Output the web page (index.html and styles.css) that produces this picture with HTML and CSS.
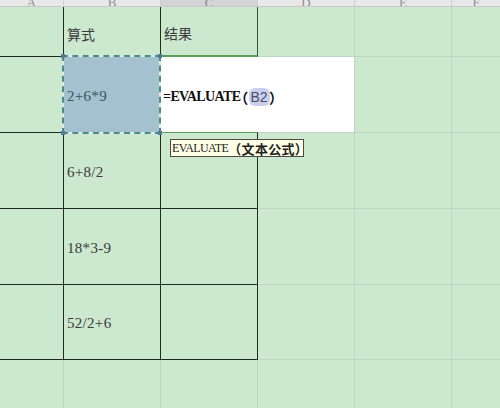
FILE: index.html
```html
<!DOCTYPE html>
<html>
    <head>
        <meta charset="utf-8" />
        <title>EVALUATE</title>
        <link rel="stylesheet" href="styles.css">
    </head>

    <body>
      <div id="feuille">

            <!-- en-tetes de colonnes -->
            <div class="hd"><span>A</span></div>
            <div class="hd"><span>B</span></div>
            <div class="hd actif"><span>C</span></div>
            <div class="hd"><span>D</span></div>
            <div class="hd"><span>E</span></div>
            <div class="hd fin"><span>F</span></div>

            <!-- ligne 1 -->
            <div class="cell tbl"></div>
            <div class="cell tbl titre">算式</div>
            <div class="cell tbl titre c1">结果</div>
            <div class="cell"></div>
            <div class="cell"></div>
            <div class="cell fin"></div>

            <!-- ligne 2 -->
            <div class="cell tbl"></div>
            <div class="cell tbl num sel">2+6*9</div>
            <div class="cell tbl c2"></div>
            <div class="cell"></div>
            <div class="cell"></div>
            <div class="cell fin"></div>

            <!-- ligne 3 -->
            <div class="cell tbl"></div>
            <div class="cell tbl num">6+8/2</div>
            <div class="cell tbl"></div>
            <div class="cell"></div>
            <div class="cell"></div>
            <div class="cell fin"></div>

            <!-- ligne 4 -->
            <div class="cell tbl"></div>
            <div class="cell tbl num">18*3-9</div>
            <div class="cell tbl"></div>
            <div class="cell"></div>
            <div class="cell"></div>
            <div class="cell fin"></div>

            <!-- ligne 5 -->
            <div class="cell tbl"></div>
            <div class="cell tbl num">52/2+6</div>
            <div class="cell tbl"></div>
            <div class="cell"></div>
            <div class="cell"></div>
            <div class="cell fin"></div>

            <!-- ligne 6 -->
            <div class="cell"></div>
            <div class="cell"></div>
            <div class="cell"></div>
            <div class="cell"></div>
            <div class="cell"></div>
            <div class="cell fin"></div>

            <!-- selection copiee (pointilles) -->
            <div id="fourmis">
                <i class="coin hg"></i><i class="coin hd2"></i>
                <i class="coin bg"></i><i class="coin bd"></i>
            </div>

            <!-- saisie de la formule -->
            <div id="saisie">
                <span class="fx">=EVALUATE</span><span class="par g">（</span><span class="ref">B2</span><span class="par">）</span>
            </div>

            <!-- info-bulle -->
            <div id="bulle"><span class="fn">EVALUATE</span><span class="cn">（文本公式）</span></div>
      </div>
    </body>
</html>
```

FILE: styles.css
```css
body{
    margin: 0;
    background-color: #cce8cf;
    overflow: hidden;
}
#feuille{
    position: relative;
    display: grid;
    grid-template-columns: 64px 97px 97px 97px 97px 48px;
    grid-template-rows: 7px 50px 76px 76px 76px 75px 76px;
    width: 500px;
    height: 408px;
    overflow: hidden;
}
.hd{
    box-sizing: border-box;
    background-color: #e8e8e8;
    border-right: 1px solid #cfcfcf;
    border-bottom: 1px solid #c9c9c9;
    display: flex;
    align-items: flex-end;
    justify-content: center;
    overflow: hidden;
}
.hd span{
    font-family: "Liberation Serif", serif;
    font-size: 13px;
    line-height: 13px;
    color: #8a8a8a;
    margin-bottom: -3px;
}
.hd.actif{
    background-color: #d4d4d4;
}
.cell{
    box-sizing: border-box;
    border-right: 1px solid #bcd6bf;
    border-bottom: 1px solid #bcd6bf;
    display: flex;
    align-items: center;
    padding-left: 3px;
    color: #3a3a3a;
}
.fin{
    border-right: none;
}
.tbl{
    border-right-color: #1d2e1f;
    border-bottom-color: #1d2e1f;
}
.titre{
    font-family: "Noto Sans CJK SC", sans-serif;
    font-size: 14px;
    padding-top: 4px;
}
.c1{
    border-right-color: #2f5a33;
    border-bottom: 2px solid #5c9e5c;
}
.c2{
    border-bottom-color: #5c9e5c;
}
.num{
    font-family: "Liberation Serif", serif;
    font-size: 15px;
    padding-top: 3px;
    letter-spacing: 0.3px;
}
.sel{
    background-color: #a4c1cf;
    color: #3d5060;
}
#fourmis{
    position: absolute;
    left: 62px;
    top: 55px;
    width: 99px;
    height: 79px;
    box-sizing: border-box;
    border: 2px solid #dcebe6;
}
#fourmis::after{
    content: "";
    position: absolute;
    left: -2px;
    top: -2px;
    right: -2px;
    bottom: -2px;
    border: 2px dashed #4b8d86;
}
.coin{
    position: absolute;
    width: 4px;
    height: 4px;
    background-color: #54779a;
    z-index: 1;
}
.hg{ left: -3px; top: -3px; }
.hd2{ right: -3px; top: -3px; }
.bg{ left: -3px; bottom: -3px; }
.bd{ right: -3px; bottom: -3px; }
#saisie{
    position: absolute;
    left: 161px;
    top: 57px;
    width: 193px;
    height: 75px;
    background-color: #ffffff;
    display: flex;
    align-items: center;
    padding-left: 2px;
    padding-top: 4px;
    box-sizing: border-box;
    color: #111;
}
.fx{
    font-family: "Liberation Serif", serif;
    font-weight: bold;
    font-size: 14px;
    letter-spacing: -0.6px;
}
.par{
    font-family: "Noto Sans CJK SC", sans-serif;
    font-size: 14px;
    font-weight: bold;
    font-feature-settings: "palt";
}
.par.g{
    padding-right: 1px;
}
.ref{
    font-family: "Liberation Sans", sans-serif;
    font-size: 14px;
    color: #4a4e66;
    background-color: #c9cfee;
    border-radius: 6px;
    padding: 1px 2px;
}
#bulle{
    position: absolute;
    left: 170px;
    top: 139px;
    width: 134px;
    height: 18px;
    box-sizing: border-box;
    border: 1px solid #4a4a4a;
    background-color: #ffffe6;
    display: flex;
    align-items: center;
    padding-left: 1px;
    white-space: nowrap;
    color: #222;
}
.fn{
    font-family: "Liberation Serif", serif;
    font-size: 12px;
    letter-spacing: -0.6px;
}
.cn{
    font-family: "Noto Sans CJK SC", sans-serif;
    font-weight: bold;
    font-size: 13px;
    letter-spacing: 0.3px;
}
```
